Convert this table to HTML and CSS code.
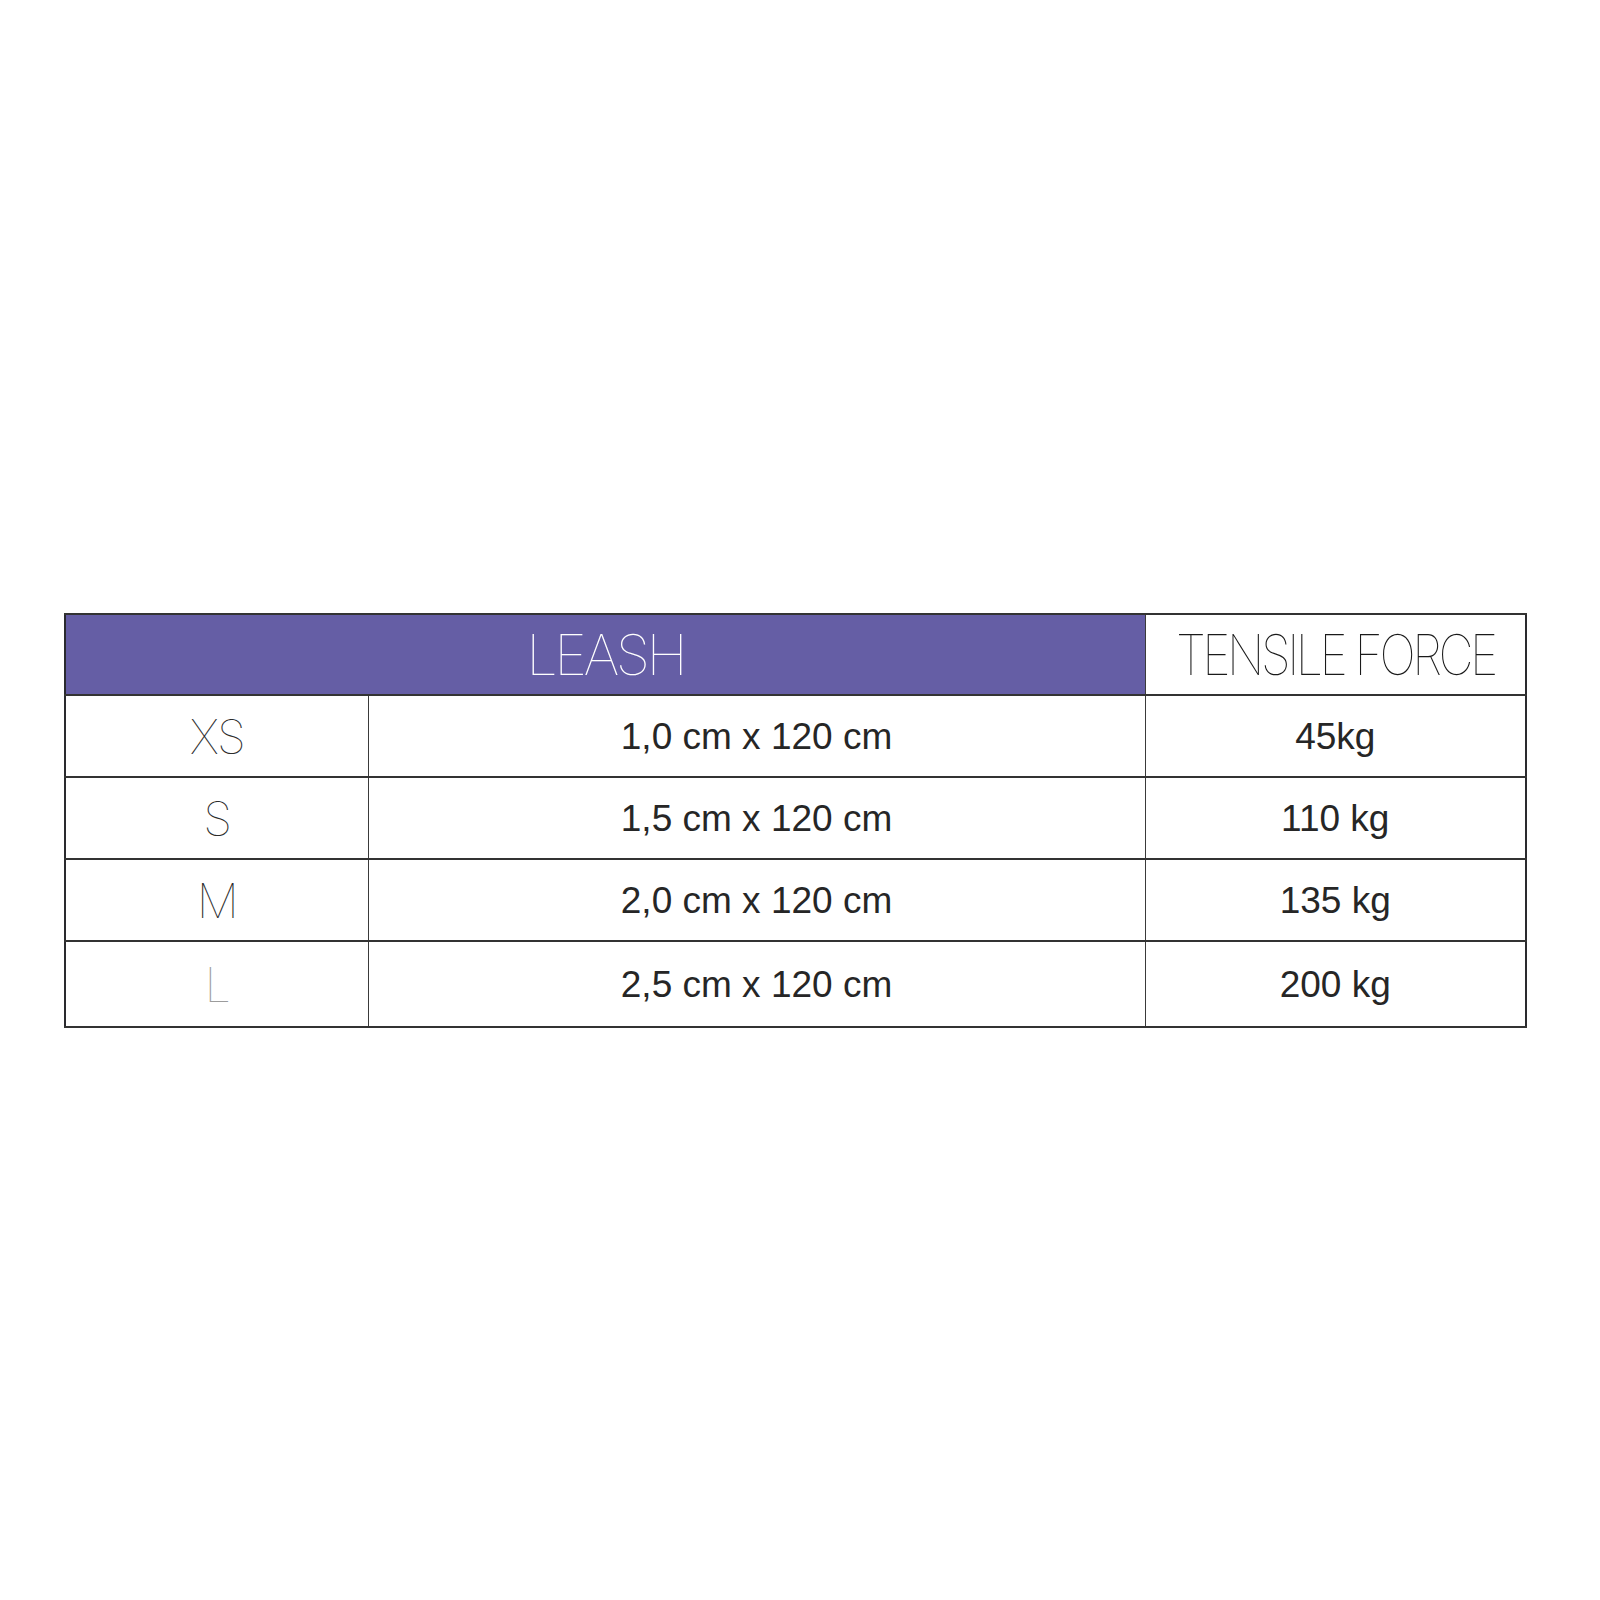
FILE: index.html
```html
<!DOCTYPE html>
<html lang="en">
<head>
<meta charset="utf-8">
<title>Leash size chart</title>
<link rel="stylesheet" href="styles.css">
</head>
<body>
<div class="sheet">
  <table class="chart">
    <colgroup>
      <col class="c-size">
      <col class="c-dim">
      <col class="c-force">
    </colgroup>
    <thead>
      <tr class="head-row">
        <th class="h-leash" colspan="2">LEASH</th>
        <th class="h-force"><span class="force-text">TENSILE FORCE</span></th>
      </tr>
    </thead>
    <tbody>
      <tr>
        <td class="size">XS</td>
        <td class="val">1,0 cm x 120 cm</td>
        <td class="val">45kg</td>
      </tr>
      <tr>
        <td class="size">S</td>
        <td class="val">1,5 cm x 120 cm</td>
        <td class="val">110 kg</td>
      </tr>
      <tr>
        <td class="size">M</td>
        <td class="val">2,0 cm x 120 cm</td>
        <td class="val">135 kg</td>
      </tr>
      <tr class="last">
        <td class="size size-light">L</td>
        <td class="val">2,5 cm x 120 cm</td>
        <td class="val">200 kg</td>
      </tr>
    </tbody>
  </table>
</div>
</body>
</html>
```
FILE: styles.css
```css
html, body {
  margin: 0;
  padding: 0;
  background: #ffffff;
}

.sheet {
  padding: 613px 0 0 64px;
}

.chart {
  border-collapse: collapse;
  width: 1461px;
  table-layout: fixed;
  border: 2px solid #2a2a2e;
}

.c-size { width: 303px; }
.c-dim { width: 777px; }
.c-force { width: 381px; }

.chart th,
.chart td {
  padding: 0;
  text-align: center;
  vertical-align: middle;
  height: 80px;
  border-left: 1px solid #3a3a3a;
  border-right: 1px solid #3a3a3a;
  border-top: 2px solid #333333;
  border-bottom: 2px solid #333333;
}

.chart th {
  height: 79px;
}

.chart tr.last td {
  height: 84px;
}

.h-leash {
  background: #655ea5;
  color: #ffffff;
  font-family: "Inter", sans-serif;
  font-weight: 100;
  font-size: 56px;
  letter-spacing: -3.5px;
  line-height: 1;
}

.h-force {
  background: #ffffff;
  color: #1a1a1a;
  font-family: "Inter", sans-serif;
  font-weight: 100;
  font-size: 56px;
  line-height: 1;
}

.force-text {
  display: inline-block;
  letter-spacing: -4px;
  transform: scaleX(0.865);
  white-space: nowrap;
}

.size {
  font-family: "Inter", sans-serif;
  font-weight: 100;
  font-size: 47px;
  color: #2c2c2c;
  letter-spacing: -2px;
  line-height: 1;
}

.size-light {
  color: #9c9c9c;
}

.val {
  font-family: "Liberation Sans", Arial, sans-serif;
  font-size: 37px;
  color: #262626;
  line-height: 1;
}
```
